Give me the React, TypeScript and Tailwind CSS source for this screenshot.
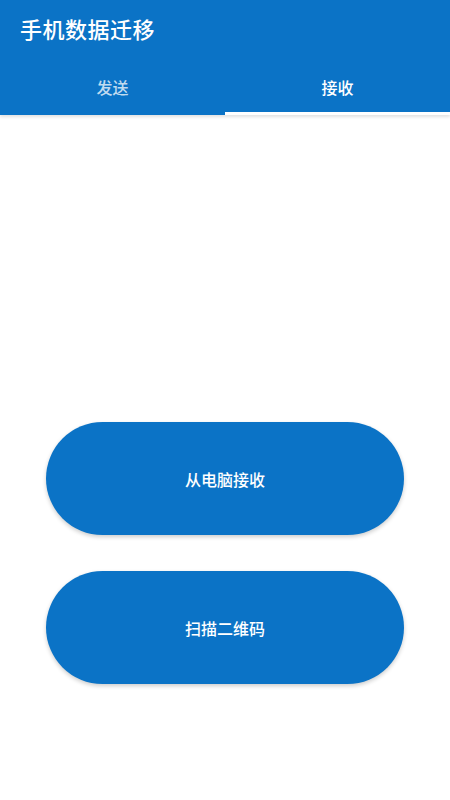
import React, { useState } from 'react'

const font = { fontFamily: '"Noto Sans CJK SC", "Noto Sans", sans-serif' }

export default function App() {
  const [tab, setTab] = useState(1)
  const tabs = ['发送', '接收']

  return (
    <div className="w-[450px] h-[800px] bg-white flex flex-col" style={font}>
      <div className="bg-[#0b73c6] shadow-[0_2px_3px_rgba(0,0,0,0.12)]">
        <div className="h-[56px] flex items-center px-5">
          <h1 className="text-white text-[22px] font-medium tracking-[0.5px]">手机数据迁移</h1>
        </div>
        <div className="flex h-[59px]">
          {tabs.map((t, i) => (
            <button
              key={t}
              onClick={() => setTab(i)}
              className={`flex-1 flex items-center justify-center pt-[6px] text-[16px] font-medium border-b-[3px] ${
                tab === i ? 'text-white border-white' : 'text-white/75 border-transparent'
              }`}
            >
              {t}
            </button>
          ))}
        </div>
      </div>

      <div className="flex flex-col items-center pt-[307px] gap-[36px]">
        <button className="w-[358px] h-[113px] rounded-full bg-[#0b73c6] text-white text-[16px] font-medium shadow-[0_2px_4px_rgba(0,0,0,0.2)]">
          从电脑接收
        </button>
        <button className="w-[358px] h-[113px] rounded-full bg-[#0b73c6] text-white text-[16px] font-medium shadow-[0_2px_4px_rgba(0,0,0,0.2)]">
          扫描二维码
        </button>
      </div>
    </div>
  )
}
